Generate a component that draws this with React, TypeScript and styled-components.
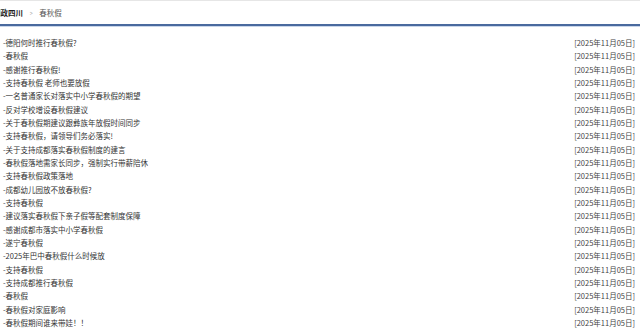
import React from 'react';
import styled, { createGlobalStyle } from 'styled-components';

const GlobalStyle = createGlobalStyle`
  html, body {
    margin: 0;
    padding: 0;
    background: #fff;
    font-family: "Noto Sans CJK SC", "Noto Sans", sans-serif;
    overflow: hidden;
  }
`;

const items = [
  '-德阳何时推行春秋假?',
  '-春秋假',
  '-感谢推行春秋假!',
  '-支持春秋假 老师也要放假',
  '-一名普通家长对落实中小学春秋假的期望',
  '-反对学校增设春秋假建议',
  '-关于春秋假期建议跟彝族年放假时间同步',
  '-支持春秋假，请领导们务必落实!',
  '-关于支持成都落实春秋假制度的建言',
  '-春秋假落地需家长同步，强制实行带薪陪休',
  '-支持春秋假政策落地',
  '-成都幼儿园放不放春秋假?',
  '-支持春秋假',
  '-建议落实春秋假下亲子假等配套制度保障',
  '-感谢成都市落实中小学春秋假',
  '-遂宁春秋假',
  '-2025年巴中春秋假什么时候放',
  '-支持春秋假',
  '-支持成都推行春秋假',
  '-春秋假',
  '-春秋假对家庭影响',
  '-春秋假期间谁来带娃！！',
];

function App() {
  return (
    <>
      <GlobalStyle />
      <Page>
        <Header>
          <Crumb>问政四川</Crumb>
          <Sep>&gt;</Sep>
          <Current>春秋假</Current>
        </Header>
        <List>
          {items.map((title, i) => (
            <Row key={i}>
              <Title>{title}</Title>
              <Date>[2025年11月05日]</Date>
            </Row>
          ))}
        </List>
      </Page>
    </>
  );
}

export default App;

const Page = styled.div`
  width: 640px;
  height: 330px;
  overflow: hidden;
`;

const Header = styled.div`
  display: flex;
  align-items: center;
  height: 23px;
  border-top: 1px solid #e6e6e6;
  border-bottom: 2px solid #4a6a9e;
  box-shadow: 0 1px 0 #c9d6ea;
  font-size: 7.5px;
`;

const Crumb = styled.span`
  margin-left: -7px;
  font-weight: bold;
  color: #222;
`;

const Sep = styled.span`
  margin: 0 6px;
  color: #aaa;
  transform: scaleX(0.7);
`;

const Current = styled.span`
  color: #555;
`;

const List = styled.div`
  margin-top: 10px;
  padding: 0 5px 0 3px;
`;

const Row = styled.div`
  display: flex;
  justify-content: space-between;
  align-items: center;
  height: 13.33px;
  font-size: 7.5px;
`;

const Title = styled.span`
  color: #333;
`;

const Date = styled.span`
  color: #444;
`;
